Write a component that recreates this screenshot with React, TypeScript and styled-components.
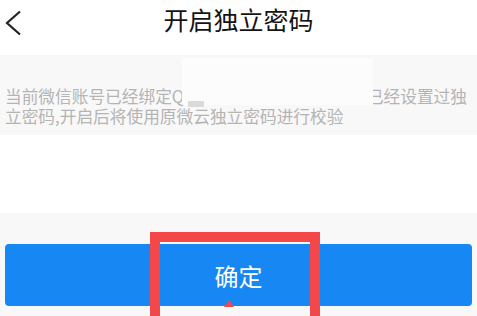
import React from "react";
import styled, { createGlobalStyle } from "styled-components";

const Global = createGlobalStyle`
  html, body { margin: 0; padding: 0; background: #ffffff; }
  body { width: 477px; height: 316px; overflow: hidden; font-family: "Noto Sans CJK SC", "Noto Sans", sans-serif; }
  #root { width: 477px; height: 316px; }
`;

const Page = styled.div`
  position: relative;
  width: 477px;
  height: 316px;
  display: flex;
  flex-direction: column;
  background: #ffffff;
  overflow: hidden;
`;

const Header = styled.header`
  height: 55px;
  display: grid;
  grid-template-columns: 40px 1fr 40px;
  align-items: start;
  background: #ffffff;
`;

const Back = styled.button`
  border: 0;
  background: transparent;
  padding: 0;
  margin: 10px 0 0 3px;
  width: 20px;
  height: 26px;
  display: flex;
  align-items: center;
  justify-content: center;
`;

const Title = styled.h1`
  margin: 3px 0 0;
  text-align: center;
  font-size: 25px;
  line-height: 32px;
  font-weight: 400;
  color: #141414;
`;

const Notice = styled.section`
  position: relative;
  height: 80px;
  background: #f8f8f8;
  padding: 31px 10px 0 5px;
  box-sizing: border-box;
  color: #b4b4b4;
  font-size: 16.7px;
  line-height: 20px;
`;

const Line = styled.div`
  display: flex;
  justify-content: space-between;
  white-space: nowrap;
`;

const Redact = styled.div<{ $left: number; $top: number; $w: number; $h: number; $color: string }>`
  position: absolute;
  left: ${(p) => p.$left}px;
  top: ${(p) => p.$top}px;
  width: ${(p) => p.$w}px;
  height: ${(p) => p.$h}px;
  background: ${(p) => p.$color};
`;

const Spacer = styled.div`
  height: 78px;
  background: #ffffff;
`;

const Footer = styled.footer`
  flex: 1;
  background: #f8f8f8;
  padding: 31px 5px 0 5px;
`;

const Confirm = styled.button`
  width: 100%;
  height: 62px;
  border: 0;
  border-radius: 4px;
  background: #1787f4;
  color: #ffffff;
  font-family: "Noto Sans CJK SC", sans-serif;
  font-size: 24px;
  padding: 0;
`;

const Highlight = styled.div`
  position: absolute;
  left: 150px;
  top: 232px;
  width: 170px;
  height: 100px;
  box-sizing: border-box;
  border: 10px solid #f3484a;
  pointer-events: none;
`;

const Pointer = styled.div`
  position: absolute;
  left: 224px;
  top: 300px;
  width: 0;
  height: 0;
  border-left: 5px solid transparent;
  border-right: 5px solid transparent;
  border-bottom: 7px solid #f3484a;
`;

export default function App() {
  return (
    <Page>
      <Global />
      <Header>
        <Back aria-label="返回">
          <svg width="18" height="26" viewBox="0 0 18 26">
            <path d="M16 1.5 L3 13 L16 24.5" fill="none" stroke="#222" strokeWidth="2.2" />
          </svg>
        </Back>
        <Title>开启独立密码</Title>
        <div />
      </Header>
      <Notice>
        <Line>
          <span>当前微信账号已经绑定Q</span>
          <span>已经设置过独</span>
        </Line>
        <Line>
          <span>立密码,开启后将使用原微云独立密码进行校验</span>
        </Line>
        <Redact $left={182} $top={3} $w={191} $h={47} $color="#fdfcfd" />
        <Redact $left={188} $top={46} $w={16} $h={6} $color="#dadada" />
      </Notice>
      <Spacer />
      <Footer>
        <Confirm>确定</Confirm>
      </Footer>
      <Highlight />
      <Pointer />
    </Page>
  );
}
